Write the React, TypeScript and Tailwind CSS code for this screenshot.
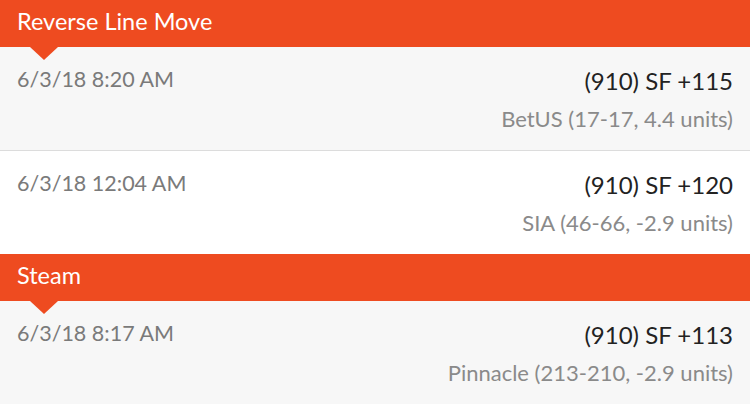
import React from "react";

type Row = { date: string; pick: string; sub: string; bg: string; border?: boolean };

function Header({ title }: { title: string }) {
  return (
    <div className="relative h-[47px] bg-[#ee4b20] flex items-start px-[17px] pt-[10px]">
      <span className="text-white text-[23.5px] leading-[23px]">{title}</span>
      <div className="absolute left-[30px] top-[47px] w-0 h-0 border-l-[14px] border-r-[14px] border-t-[13px] border-l-transparent border-r-transparent border-t-[#ee4b20] z-10" />
    </div>
  );
}

function Item({ date, pick, sub, bg, border }: Row) {
  return (
    <div className={`${bg} ${border ? "border-b border-[#dcdcdc] h-[104px]" : "h-[103px]"} flex justify-between px-[17px] pt-[19px]`}>
      <span className="text-[#7a7a7a] text-[21.5px] leading-[26px]">{date}</span>
      <div className="flex flex-col items-end">
        <span className="text-[#222] text-[24px] leading-[29px]">{pick}</span>
        <span className="text-[#8a8a8a] text-[22px] leading-[26px] mt-[11px]">{sub}</span>
      </div>
    </div>
  );
}

export default function App() {
  return (
    <div className="w-[750px] h-[406px] overflow-hidden bg-white" style={{ fontFamily: "Lato, 'Open Sans', sans-serif" }}>
      <Header title="Reverse Line Move" />
      <Item date="6/3/18 8:20 AM" pick="(910) SF +115" sub="BetUS (17-17, 4.4 units)" bg="bg-[#f7f7f7]" border />
      <Item date="6/3/18 12:04 AM" pick="(910) SF +120" sub="SIA (46-66, -2.9 units)" bg="bg-white" />
      <Header title="Steam" />
      <Item date="6/3/18 8:17 AM" pick="(910) SF +113" sub="Pinnacle (213-210, -2.9 units)" bg="bg-[#f7f7f7]" />
    </div>
  );
}
